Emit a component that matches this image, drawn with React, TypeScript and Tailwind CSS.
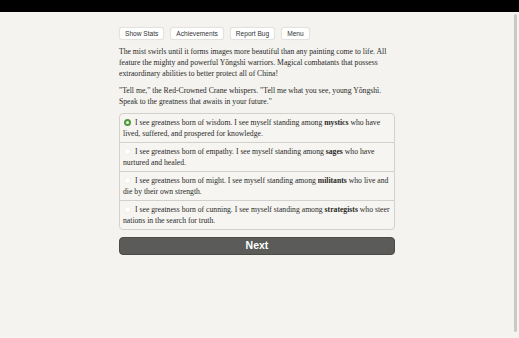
import React from "react";

const serif = { fontFamily: '"Liberation Serif", "Times New Roman", serif' };
const sans = { fontFamily: '"Liberation Sans", Arial, sans-serif' };

const options: { pre: string; bold: string; post: string }[] = [
  { pre: "I see greatness born of wisdom. I see myself standing among ", bold: "mystics", post: " who have lived, suffered, and prospered for knowledge." },
  { pre: "I see greatness born of empathy. I see myself standing among ", bold: "sages", post: " who have nurtured and healed." },
  { pre: "I see greatness born of might. I see myself standing among ", bold: "militants", post: " who live and die by their own strength." },
  { pre: "I see greatness born of cunning. I see myself standing among ", bold: "strategists", post: " who steer nations in the search for truth." },
];

export default function App() {
  return (
    <div className="w-[519px] h-[338px] flex flex-col bg-[#f4f3ef] overflow-hidden">
      <div className="h-[12px] bg-black shrink-0" />
      <div className="flex flex-1 min-h-0">
        <div className="flex-1 pt-[15px]">
          <div className="mx-auto w-[276px] text-[#2b2a28]">
            <div className="flex gap-[6px]" style={sans}>
              {["Show Stats", "Achievements", "Report Bug", "Menu"].map((b) => (
                <div
                  key={b}
                  className="h-[13px] px-[5px] flex items-center rounded-[3px] bg-white border border-[#e4e2dc] text-[6.6px] text-[#333] shadow-[0_0_1px_rgba(0,0,0,0.08)]"
                >
                  {b}
                </div>
              ))}
            </div>
            <div style={serif} className="text-[7.7px] leading-[11px]">
              <p className="mt-[6px]">
                The mist swirls until it forms images more beautiful than any painting come to life. All feature the mighty and powerful Yǒngshì warriors. Magical combatants that possess extraordinary abilities to better protect all of China!
              </p>
              <p className="mt-[6px]">
                "Tell me," the Red-Crowned Crane whispers. "Tell me what you see, young Yǒngshì. Speak to the greatness that awaits in your future."
              </p>
              <div className="mt-[6px] border border-[#d3d1cb] rounded-[4px] bg-[#f6f5f1] overflow-hidden">
                {options.map((o, i) => (
                  <div
                    key={i}
                    className={`pl-[3px] pr-[2px] pt-[3px] pb-[3px] ${i > 0 ? "border-t border-[#d3d1cb]" : ""}`}
                  >
                    <span className="inline-flex align-middle mr-[4px] ml-[1px] relative top-[-1px]">
                      {i === 0 ? (
                        <span className="w-[7px] h-[7px] rounded-full bg-[#4f9a3c] flex items-center justify-center">
                          <span className="w-[3px] h-[3px] rounded-full bg-[#e8f3e0]" />
                        </span>
                      ) : (
                        <span className="w-[7px] h-[7px] rounded-full bg-white border border-[#eeede9]" />
                      )}
                    </span>
                    {o.pre}
                    <b className="font-bold">{o.bold}</b>
                    {o.post}
                  </div>
                ))}
              </div>
            </div>
            <div
              style={sans}
              className="mt-[7px] h-[18px] rounded-[4px] bg-[#5b5b59] border border-[#4a4a48] flex items-center justify-center text-white font-bold text-[10.5px]"
            >
              Next
            </div>
          </div>
        </div>
        <div className="w-[4px] mr-[1px] pt-[2px] pb-[6px] flex">
          <div className="w-[3px] bg-[#c9c9c7] rounded-[2px]" />
        </div>
      </div>
    </div>
  );
}
